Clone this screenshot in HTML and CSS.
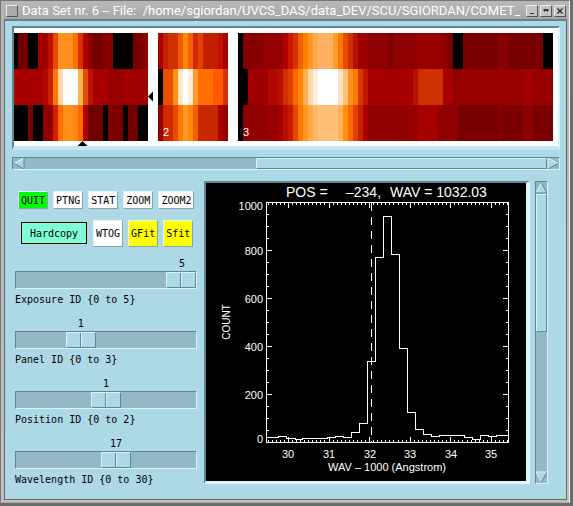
FILE: index.html
```html
<!DOCTYPE html>
<html lang="en">
<head>
<meta charset="utf-8">
<title>Data Set nr. 6</title>
<link rel="stylesheet" href="styles.css">
</head>
<body>
<div class="window">
  <header class="titlebar">
    <button class="winbtn menu" type="button" aria-label="Window menu"></button>
    <h1 class="title">Data Set nr. 6 -- File: &nbsp;/home/sgiordan/UVCS_DAS/data_DEV/SCU/SGIORDAN/COMET_</h1>
    <button class="winbtn" type="button" aria-label="Minimize"><svg viewBox="0 0 10 10"><path d="M3 7.500h4" stroke="#333"/></svg></button>
    <button class="winbtn" type="button" aria-label="Maximize"><svg viewBox="0 0 10 10"><path d="M2.500 4h5" stroke="#333" stroke-width="2"/><path d="M3 5.500h1M6 5.500h1" stroke="#555"/></svg></button>
    <button class="winbtn" type="button" aria-label="Close"><svg viewBox="0 0 10 10"><path d="M2.500 2.500l5 5m0-5l-5 5" stroke="#333" stroke-width="1.500"/></svg></button>
  </header>
  <main class="client">
    <section class="well">
      <svg class="drawing" id="spectra" viewBox="14 28 544 118" role="img" aria-label="Detector panels">
        <g id="cells" shape-rendering="crispEdges"></g>
        <path d="M148 96.500l5-5v10zM77.500 146l5-5 5 5z" fill="#000"/>
        <text class="panel-no" x="163" y="136">2</text>
        <text class="panel-no" x="243" y="136">3</text>
      </svg>
    </section>
    <div class="hscroll">
      <button type="button" class="arrow" aria-label="Scroll left"><svg viewBox="0 0 12 11"><path d="M11 0L1 5.500 11 11z" fill="#add8e6"/><path d="M11 0L1 5.500" stroke="#e8fbff"/><path d="M1 5.500L11 11V0" stroke="#5f8792" fill="none"/></svg></button>
      <div class="space"></div>
      <div class="thumb"></div>
      <button type="button" class="arrow" aria-label="Scroll right"><svg viewBox="0 0 12 11"><path d="M1 0L11 5.500 1 11z" fill="#add8e6"/><path d="M1 11V0L11 5.500" stroke="#d8f4fb" fill="none"/><path d="M1 11L11 5.500" stroke="#5f8792"/></svg></button>
    </div>
    <div class="lower">
      <form class="controls">
        <div class="row">
          <button class="cmd quit" type="button">QUIT</button>
          <button class="cmd" type="button">PTNG</button>
          <button class="cmd" type="button">STAT</button>
          <button class="cmd" type="button">ZOOM</button>
          <button class="cmd" type="button">ZOOM2</button>
        </div>
        <div class="row tall">
          <button class="cmd hard" type="button">Hardcopy</button>
          <button class="cmd" type="button">WTOG</button>
          <button class="cmd fit" type="button">GFit</button>
          <button class="cmd fit" type="button">Sfit</button>
        </div>
        <div class="scales">
          <div class="scale">
            <output for="exposure" style="--pos:1">5</output>
            <input type="range" id="exposure" min="0" max="5" value="5">
            <label for="exposure">Exposure ID {0 to 5}</label>
          </div>
          <div class="scale">
            <output for="panel" style="--pos:.3333">1</output>
            <input type="range" id="panel" min="0" max="3" value="1">
            <label for="panel">Panel ID {0 to 3}</label>
          </div>
          <div class="scale">
            <output for="position" style="--pos:.5">1</output>
            <input type="range" id="position" min="0" max="2" value="1">
            <label for="position">Position ID {0 to 2}</label>
          </div>
          <div class="scale">
            <output for="wavelength" style="--pos:.5667">17</output>
            <input type="range" id="wavelength" min="0" max="30" value="17">
            <label for="wavelength">Wavelength ID {0 to 30}</label>
          </div>
        </div>
      </form>
      <section class="well plot">
        <svg class="drawing" viewBox="206 183 320 298" role="img" aria-label="Count by wavelength">
          <g class="line" id="axes" shape-rendering="crispEdges">
            <path d="M266.500 202.500H508.500V442.500H266.500z"/>
            <path d="M371.500 203V442" stroke-dasharray="8 6"/>
            <path d="M266.500 437.500H278.500V436.500H286.500V438.500H295.500V439.500H302.500V438.500H327.500V437.500H335.500V436.500H343.500V437.500H351.500V432.500H359.500V423.500H367.500V361.500H375.500V257.500H383.500V216.500H391.500V254.500H399.500V348.500H407.500V412.500H415.500V429.500H423.500V434.500H431.500V436.500H439.500V435.500H464.500V437.500H472.500V439.500H480.500V435.500H488.500V436.500H496.500V435.500H508.500"/>
          </g>
          <g class="heading">
            <text x="286" y="197">POS =</text>
            <text x="346" y="197">–234,</text>
            <text x="390" y="197">WAV = 1032.03</text>
          </g>
          <g class="ticks end">
            <text x="263" y="210">1000</text>
            <text x="263" y="255">800</text>
            <text x="263" y="303">600</text>
            <text x="263" y="351">400</text>
            <text x="263" y="399">200</text>
            <text x="263" y="443">0</text>
          </g>
          <g class="ticks mid">
            <text x="288" y="458">30</text>
            <text x="329" y="458">31</text>
            <text x="370" y="458">32</text>
            <text x="410" y="458">33</text>
            <text x="451" y="458">34</text>
            <text x="491" y="458">35</text>
            <text x="387" y="471">WAV – 1000 (Angstrom)</text>
          </g>
          <text class="count" transform="translate(230 322) rotate(-90)">COUNT</text>
        </svg>
      </section>
      <div class="vscroll">
        <button type="button" class="arrow" aria-label="Scroll up"><svg viewBox="0 0 11 12"><path d="M0 11L5.500 1 11 11z" fill="#add8e6"/><path d="M0 11L5.500 1" stroke="#e8fbff"/><path d="M5.500 1L11 11H0" stroke="#5f8792" fill="none"/></svg></button>
        <div class="thumb"></div>
        <div class="space"></div>
        <button type="button" class="arrow" aria-label="Scroll down"><svg viewBox="0 0 11 12"><path d="M0 1L5.500 11 11 1z" fill="#add8e6"/><path d="M5.500 11L0 1H11" stroke="#d8f4fb" fill="none"/><path d="M5.500 11L11 1" stroke="#5f8792"/></svg></button>
      </div>
    </div>
  </main>
</div>
<script src="plot.js"></script>
</body>
</html>
```
FILE: plot.js
```js
const NS = 'http://www.w3.org/2000/svg';

function add(parent, name, attrs) {
  const el = document.createElementNS(NS, name);
  for (const key in attrs) el.setAttribute(key, attrs[key]);
  parent.appendChild(el);
}

// Each row is a list of "bins:colour"; one bin is 5 units wide.
const panels = [
  { x: 13, rows: [
    '1:000 2:700000 2:000 2:a00000 1:c01000 1:e84800 3:ff9020 1:ff7000 1:d83000 1:b00000 1:880000 2:740000 2:880000 4:000 2:780000 1:900000',
    '6:a80000 1:b00800 1:c82000 1:ff7800 1:ffd8a8 3:fff 1:ffb050 1:e05000 1:c01000 3:a80000 3:980000 5:a00000',
    '3:000 1:780000 2:000 2:900000 1:d02000 1:ff7000 2:ff9018 1:ff8810 1:ff6800 1:b00000 3:700000 1:000 3:7c0000 1:000 2:700000 2:000'
  ] },
  { x: 158, rows: [
    '1:a80000 1:c02000 2:d03000 1:f05800 1:ff8808 1:f86000 1:d02800 1:e04000 3:c02000 1:c01000 1:a80000',
    '1:000 2:e85000 1:ff9010 1:ffe8c8 1:fff 1:ffeedd 1:ff9830 3:ff7000 2:ff5800 1:d83000',
    '1:900000 2:d02800 1:e84800 1:ff7800 1:ff9820 1:ff8808 1:f06000 4:c82800 1:b00000 1:900000'
  ] },
  { x: 238, rows: [
    '1:000 4:880000 4:940000 1:b00000 1:c81800 1:d83000 1:f06000 1:ff8000 1:ff9820 1:ffa848 3:ffb060 1:ff9c30 1:ff7800 1:e84800 1:d03000 1:b81000 2:a00000 4:900000 1:7c0000 5:900000 5:980000 1:8c0000 1:780000 2:000 7:780000 2:880000 7:780000 2:000',
    '2:000 4:a00000 2:b00800 1:b81000 1:d03000 1:e04000 1:ff6800 1:ff8808 1:ffb050 1:ffd8a8 1:fff0e0 4:fff 1:ffe0c0 1:ffc078 1:ff9020 1:ff7800 1:d83800 1:c01800 9:a80000 1:b81000 5:d03000 2:a80000 1:900000 13:980000 2:a00000 4:980000',
    '1:000 5:900000 2:980000 1:a80000 1:b81000 1:c81800 1:e04800 1:ff7800 1:ff9820 1:ffa848 1:ffb868 4:ffc078 1:ffb060 1:ff9008 1:ff6800 1:e04000 1:c82000 1:a80000 8:900000 2:980000 4:a80000 4:900000 8:780000 1:880000 4:780000 2:8c0000 4:780000'
  ] }
];

const cells = document.getElementById('cells');
for (const panel of panels) {
  panel.rows.forEach((row, i) => {
    let x = panel.x;
    for (const run of row.split(' ')) {
      const [bins, colour] = run.split(':');
      add(cells, 'rect', { x, y: 33 + 36 * i, width: bins * 5, height: 36, fill: '#' + colour });
      x += bins * 5;
    }
  });
}

// Tick marks on all four sides of the chart frame.
let d = '';
for (let i = -5; i <= 54; i++) {
  const x = Math.floor(288.4 + i * 4.06) + 0.5;
  const len = i % 10 === 0 ? 5 : 2;
  d += `M${x} 203v${len}M${x} 442v-${len}`;
}
for (let i = 1; i < 20; i++) {
  const y = 442.5 - 12 * i;
  const len = i % 4 === 0 ? 5 : 2;
  d += `M267 ${y}h${len}M508 ${y}h-${len}`;
}
add(document.getElementById('axes'), 'path', { d });
```
FILE: styles.css
```css
* { box-sizing: border-box; }

body {
  margin: 0;
  background: #6c6c6c;
  font-family: "DejaVu Sans Mono", monospace;
  font-size: 10px;
  color: #000;
}

button { padding: 0; margin: 0; font: inherit; color: inherit; border-radius: 0; }

.window {
  margin: 0 3px 0 0;
  padding: 1px 2px 2px 3px;
  background: linear-gradient(#b4b4b4, #c4c0c0);
  border: 1px solid #777;
  border-bottom: 1px solid #aaa;
  border-right-color: #f4f4f4;
}

.titlebar {
  display: flex;
  align-items: center;
  gap: 2px;
  height: 17px;
  padding: 0 1px 0 2px;
  background: linear-gradient(#b8b8b8, #a6a6a6);
}

.title {
  flex: 1;
  min-width: 0;
  margin: 0;
  padding-left: 2px;
  overflow: hidden;
  white-space: nowrap;
  font: 13px/17px Roboto, sans-serif;
  color: #fff;
}

.winbtn {
  flex: none;
  width: 12px;
  height: 12px;
  background: #c4c4c4;
  border: 1px solid;
  border-color: #eee #555 #555 #eee;
}
.winbtn svg { display: block; width: 10px; height: 10px; }
.winbtn.menu { background: #aaa; }

.client {
  background: #add8e6;
  border: 1px solid #666;
  border-top: 2px solid #668088;
  padding: 5px 6px 15px 7px;
}

.well {
  border: solid;
  border-width: 2px 2px 4px 2px;
  border-color: #5f8792 #d8f4fb #c4e8f2 #5f8792;
  background: #fff;
}
.drawing { display: block; width: 100%; height: auto; }
.panel-no { font: 11px "Liberation Sans", sans-serif; fill: #fff; }

.hscroll, .vscroll {
  display: flex;
  background: #94b8c6;
  border: 1px solid;
  border-color: #5f8792 #d8f4fb #d8f4fb #5f8792;
}
.hscroll { height: 13px; margin: 7px 0 11px; }
.vscroll { flex-direction: column; width: 13px; margin: 0 12px 0 5px; }

.arrow { flex: none; display: block; border: 0; background: #94b8c6; }
.arrow svg { display: block; width: 100%; height: 100%; }
.hscroll .arrow { width: 12px; height: 11px; }
.vscroll .arrow { width: 11px; height: 12px; }

.thumb {
  background: #add8e6;
  border: 1px solid;
  border-color: #d8f4fb #5f8792 #5f8792 #d8f4fb;
}
.hscroll .space { flex: 232; }
.hscroll .thumb { flex: 290; }
.vscroll .space { flex: 140; }
.vscroll .thumb { flex: 137; }

.lower { display: grid; grid-template-columns: 192px 1fr auto; }
.plot { background: #000; border-width: 2px 4px 3px 2px; border-color: #5f8792 #dff6fc #dff6fc #5f8792; }

.line { fill: none; stroke: #fff; }
.plot text { fill: #fff; font-family: "Liberation Sans", sans-serif; }
.heading { font-size: 14px; }
.ticks { font-size: 11px; }
.end { text-anchor: end; }
.mid { text-anchor: middle; }
.count { font-size: 10px; text-anchor: middle; }

.controls { padding: 9px 7px 0 3px; }
.row { display: flex; align-items: center; gap: 5px; height: 20px; padding-left: 3px; }
.tall { height: 28px; margin: 9px 0 10px; padding-left: 6px; }

.cmd {
  flex: none;
  height: 18px;
  padding: 0 2px;
  background: #fff;
  border: 1px solid;
  border-color: #e4f6fa #8aa4ac #8aa4ac #e4f6fa;
}
.tall .cmd { height: 27px; }
.quit { background: #0f0; }
.fit { background: #ff0; }
.tall .hard {
  width: 66px;
  height: 22px;
  margin-right: 1px;
  background: #7fffd4;
  border: 1px solid #000;
}

.scales { display: grid; gap: 13px; }
.scale { height: 47px; line-height: 14px; }
.scale output {
  display: block;
  width: 30px;
  height: 14px;
  margin-left: calc((100% - 30px) * var(--pos));
  text-align: center;
}
.scale label { display: block; padding-top: 4px; }

input[type="range"] {
  appearance: none;
  display: block;
  width: 100%;
  height: 18px;
  margin: 0;
  background: #94b8c6;
  border: 1px solid;
  border-color: #5f8792 #d8f4fb #d8f4fb #5f8792;
}
input[type="range"]::-webkit-slider-thumb {
  appearance: none;
  width: 30px;
  height: 16px;
  border: 1px solid;
  border-color: #d8f4fb #5f8792 #5f8792 #d8f4fb;
  background: linear-gradient(90deg, #add8e6 13px, #5f8792 13px 14px, #d8f4fb 14px 15px, #add8e6 15px);
}
```
